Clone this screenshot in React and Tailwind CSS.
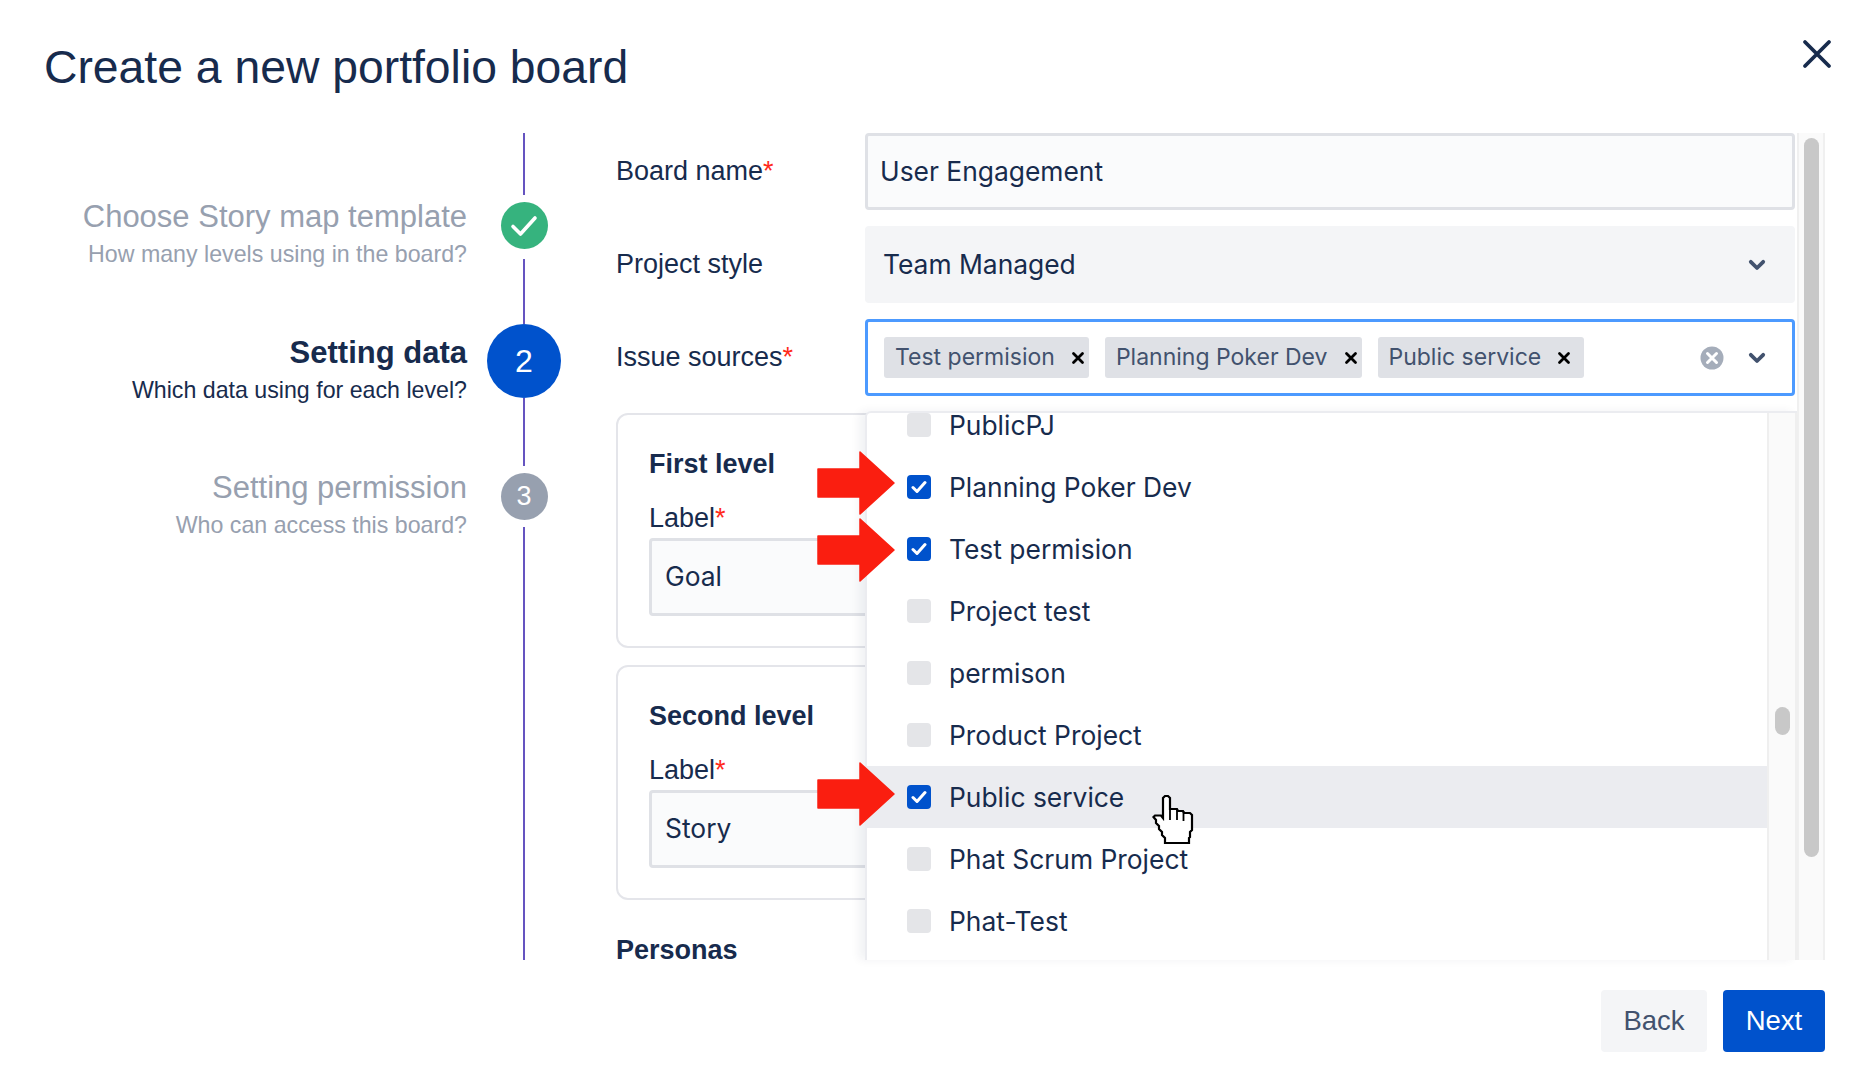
import React from 'react';

const sans = 'font-["Liberation_Sans",Arial,sans-serif]';
const inter = 'font-["Inter",sans-serif]';

const options = [
  { label: 'PublicPJ' },
  { label: 'Planning Poker Dev', checked: true },
  { label: 'Test permision', checked: true },
  { label: 'Project test' },
  { label: 'permison' },
  { label: 'Product Project' },
  { label: 'Public service', checked: true, hover: true },
  { label: 'Phat Scrum Project' },
  { label: 'Phat-Test' },
];

const Chevron = () => (
  <svg width="18" height="12" viewBox="0 0 18 12" fill="none" className="text-[#42526e]">
    <path d="M2.8 2.8 9 9l6.2-6.2" stroke="currentColor" strokeWidth="3.8" strokeLinecap="round" strokeLinejoin="round" />
  </svg>
);

const Arrow = ({ top }) => (
  <svg
    width="78"
    height="64"
    viewBox="0 0 78 64"
    className="absolute left-[817px]"
    style={{ top }}
  >
    <path d="M1 18h42V1l34 31-34 31V46H1z" fill="#fa1e10" stroke="#fa1e10" strokeWidth="1.5" strokeLinejoin="round" />
  </svg>
);

const Cursor = () => (
  <svg width="44" height="52" viewBox="0 0 44 52" className="absolute left-[1152px] top-[794px]">
    <path
      d="M1.5 23 3 21.500h6L11 24V4l2-2h3l2 2v11h7l1 2h5l1 2h6l2 2v15l-2 2v5l-1 1v5H13v-5l-3-3v-3l-3-3v-3l-3-3v-3z"
      fill="#fff"
      stroke="#000"
      strokeWidth="2.2"
      strokeLinejoin="miter"
    />
    <path d="M18 15v11M25 15v11M31.500 17v10" stroke="#000" strokeWidth="1.8" />
  </svg>
);

const Tag = ({ label, wide }) => (
  <div className={`h-[41px] flex items-center gap-[16px] pl-[11px] rounded-[3px] bg-[#dfe1e6] text-[#42526e] text-[23px] ${wide ? 'pr-[13px]' : 'pr-[4px]'}`}>
    <span>{label}</span>
    <svg width="14" height="14" viewBox="0 0 14 14">
      <path d="M2.500 2.500l9 9M11.500 2.500l-9 9" stroke="#000" strokeWidth="2.8" strokeLinecap="round" />
    </svg>
  </div>
);

const Label = ({ children, required }) => (
  <span className={`${sans} text-[27px] text-[#172b4d]`}>
    {children}
    {required && <span className="text-[#ff2a1a]">*</span>}
  </span>
);

const LevelCard = ({ title, value }) => (
  <div className="h-[235px] border-2 border-[#e4e5ea] rounded-[12px] pl-[31px] pt-[33px]">
    <div className={`${sans} font-bold text-[27px] leading-[32px] text-[#172b4d]`}>{title}</div>
    <div className="mt-[22px] leading-[32px] h-[32px]">
      <Label required>Label</Label>
    </div>
    <div className={`${inter} mt-[4px] w-[400px] h-[78px] flex items-center pl-[13px] bg-[#fafbfc] border-[3px] border-[#dfe1e6] rounded-[4px] text-[26.4px] text-[#172b4d]`}>
      {value}
    </div>
  </div>
);

const Step = ({ title, sub, tone, textTop }) => (
  <div style={{ paddingTop: textTop }} className="text-right">
    <div className={`text-[31px] leading-[32px] ${tone === 'active' ? 'font-bold text-[#172b4d]' : 'text-[#97a0af]'}`}>{title}</div>
    <div className={`mt-[5px] text-[23.2px] leading-[32px] ${tone === 'active' ? 'text-[#172b4d]' : 'text-[#97a0af]'}`}>{sub}</div>
  </div>
);

const Dropdown = () => (
  <div className={`${inter} absolute left-[865px] top-[411px] w-[932px] h-[549px] bg-white border-t-2 border-l-2 border-[#ebecf0] rounded-tl-[6px] shadow-[-6px_0_10px_rgba(9,30,66,0.06)] flex`}>
    <div className="flex-1">
      {options.map((o, i) => (
        <div key={o.label} className={`flex items-center pl-[40px] gap-[18px] text-[26.4px] text-[#172b4d] ${i === 0 ? 'h-[43px] pb-[19px]' : 'h-[62px]'} ${o.hover ? 'bg-[#ebecf0]' : ''}`}>
          {o.checked ? (
            <span className="w-[24px] h-[24px] rounded-[4px] bg-[#0052cc] flex items-center justify-center">
              <svg width="16" height="14" viewBox="0 0 16 14" fill="none">
                <path d="M2 7.500 6 11.500 14 2.500" stroke="#fff" strokeWidth="3" strokeLinecap="round" strokeLinejoin="round" />
              </svg>
            </span>
          ) : (
            <span className="w-[24px] h-[24px] rounded-[4px] bg-[#e4e5e8]" />
          )}
          <span className="block leading-[24px]">{o.label}</span>
        </div>
      ))}
    </div>
    <div className="w-[30px] bg-[#fafafa] border-x-2 border-[#efefef] pl-[6px] pt-[294px]">
      <div className="w-[15px] h-[28px] rounded-full bg-[#c8c8c8]" />
    </div>
  </div>
);

export default function App() {
  return (
    <div className={`${sans} relative w-full h-[1080px] bg-white overflow-hidden`}>
      <header className="h-[133px] flex items-start justify-between pl-[44px] pr-[40px]">
        <h1 className="mt-[40px] text-[46.300px] leading-[54px] text-[#172b4d]">Create a new portfolio board</h1>
        <svg width="30" height="30" viewBox="0 0 30 30" className="mt-[39px]">
          <path d="M3 3l24 24M27 3 3 27" stroke="#172b4d" strokeWidth="3.8" strokeLinecap="round" />
        </svg>
      </header>

      <div className="h-[827px] flex">
        {/* stepper */}
        <div className="w-[616px] shrink-0 flex">
          <div className="w-[467px] shrink-0">
            <div className="h-[192px]">
              <Step title="Choose Story map template" sub="How many levels using in the board?" textTop={68} />
            </div>
            <div className="h-[74px] overflow-visible">
              <Step title="Setting data" sub="Which data using for each level?" tone="active" textTop={12} />
            </div>
            <Step title="Setting permission" sub="Who can access this board?" textTop={73} />
          </div>
          <div className="w-[114px] flex flex-col items-center">
            <div className="w-[2px] h-[62px] bg-[#6554c0]" />
            <div className="mt-[7px] w-[47px] h-[47px] rounded-full bg-[#36b37e] flex items-center justify-center">
              <svg width="28" height="22" viewBox="0 0 28 22" fill="none">
                <path d="M3 11.500 10.500 19 25 3" stroke="#fff" strokeWidth="3.600" strokeLinecap="round" strokeLinejoin="round" />
              </svg>
            </div>
            <div className="mt-[10px] w-[2px] h-[65px] bg-[#6554c0]" />
            <div className="w-[74px] h-[74px] rounded-full bg-[#0052cc] flex items-center justify-center text-white text-[32px]">2</div>
            <div className="w-[2px] h-[68px] bg-[#6554c0]" />
            <div className="mt-[7px] w-[47px] h-[47px] rounded-full bg-[#97a0af] flex items-center justify-center text-white text-[27px]">3</div>
            <div className="mt-[7px] w-[2px] flex-1 bg-[#6554c0]" />
          </div>
        </div>

        {/* form */}
        <div className="w-[1181px] shrink-0">
          <div className="flex h-[77px] items-center">
            <div className="w-[249px]"><Label required>Board name</Label></div>
            <div className={`${inter} w-[930px] h-[77px] flex items-center pl-[12px] bg-[#fafbfc] border-[3px] border-[#dfe1e6] rounded-[4px] text-[26.4px] text-[#172b4d]`}>
              User Engagement
            </div>
          </div>
          <div className="mt-[16px] flex h-[77px] items-center">
            <div className="w-[249px]"><Label>Project style</Label></div>
            <div className={`${inter} w-[930px] h-[77px] flex items-center justify-between pl-[18px] pr-[29px] bg-[#f4f5f7] rounded-[4px] text-[26.4px] text-[#172b4d]`}>
              Team Managed
              <Chevron />
            </div>
          </div>
          <div className="mt-[16px] flex h-[77px] items-center">
            <div className="w-[249px]"><Label required>Issue sources</Label></div>
            <div className={`${inter} w-[930px] h-[77px] flex items-center gap-[16px] pl-[16px] pr-[26px] bg-white border-[3px] border-[#4c9aff] rounded-[4px]`}>
              <Tag label="Test permision" />
              <Tag label="Planning Poker Dev" />
              <Tag label="Public service" wide />
              <svg width="24" height="24" viewBox="0 0 24 24" className="ml-auto mr-[8px]">
                <circle cx="12" cy="12" r="11.500" fill="#a5adba" />
                <path d="M7.500 7.500l9 9M16.500 7.500l-9 9" stroke="#fff" strokeWidth="3" strokeLinecap="round" />
              </svg>
              <Chevron />
            </div>
          </div>
          <div className="mt-[17px] w-[1179px] flex flex-col gap-[17px]">
            <LevelCard title="First level" value="Goal" />
            <LevelCard title="Second level" value="Story" />
          </div>
          <div className="mt-[42px] font-bold text-[27px] leading-[16px] text-[#172b4d]">Personas</div>
        </div>

        {/* page scrollbar */}
        <div className="w-[28px] shrink-0 bg-[#fafafa] border-x-2 border-[#f0f0f0] pl-[5px] pt-[5px]">
          <div className="w-[15px] h-[719px] rounded-full bg-[#c8c8c8]" />
        </div>
      </div>

      <footer className="flex justify-end gap-[16px] pr-[47px] pt-[30px]">
        <button className="w-[106px] h-[62px] rounded-[4px] bg-[#f4f5f7] text-[#42526e] text-[27.500px]">Back</button>
        <button className="w-[102px] h-[62px] rounded-[4px] bg-[#0052cc] text-white text-[27.500px]">Next</button>
      </footer>

      <Dropdown />
      <Arrow top={451} />
      <Arrow top={518} />
      <Arrow top={762} />
      <Cursor />
    </div>
  );
}
